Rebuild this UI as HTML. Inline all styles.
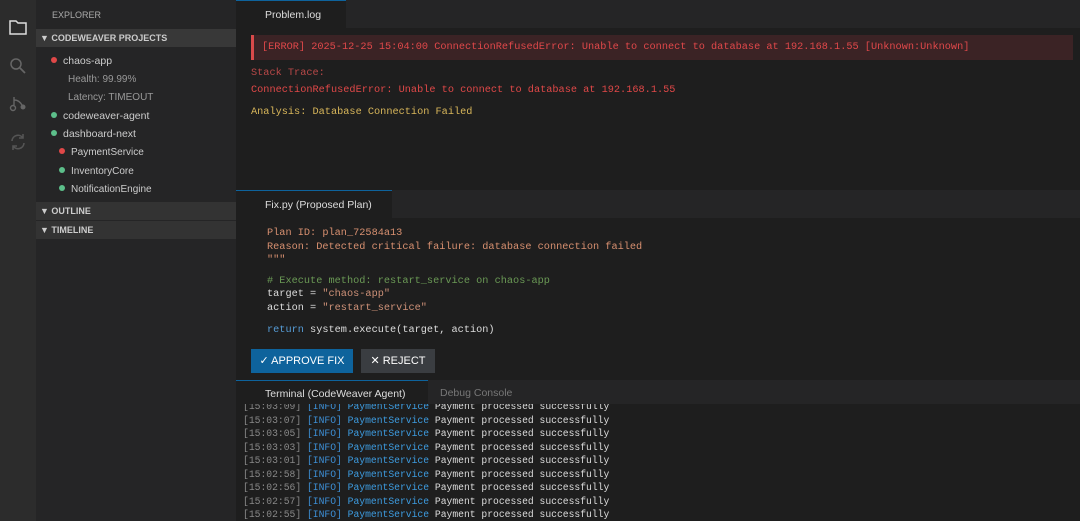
<!DOCTYPE html>
<html><head><style>
*{margin:0;padding:0;box-sizing:border-box}
body{width:1080px;height:521px;overflow:hidden;background:#1e1e1e;font-family:"Liberation Sans",sans-serif;position:relative}
.abs{position:absolute}
.mono{font-family:"Liberation Mono",monospace;font-size:10.25px;white-space:pre}
.act{left:0;top:0;width:36px;height:521px;background:#2c2c2c}
.side{left:36px;top:0;width:200px;height:521px;background:#252526;color:#ccc;font-size:11px}
.sh{position:absolute;left:0;width:200px;height:18px;background:#383838;font-weight:bold;font-size:9px;line-height:18px;padding-left:4px;color:#ccc}
.it{position:absolute;font-size:10.5px;color:#ccc}
.dot{display:inline-block;width:6px;height:6px;border-radius:50%;margin-right:6px;vertical-align:1px}
.r{background:#e04848}.g{background:#5cbf8a}
.tabbar{left:236px;width:844px;height:28px;background:#252526}
.tab{position:absolute;top:0;height:28px;background:#1e1e1e;border-top:1px solid #0e639c;color:#ddd;font-size:10.5px;line-height:28px;padding-left:29px}
</style></head><body>
<div class="abs act">
<svg class="abs" style="left:9px;top:19px" width="18" height="16" viewBox="0 0 18 16"><path d="M1 2h6l2 2h8v11H1z" fill="none" stroke="#ddd" stroke-width="1.5"/></svg>
<svg class="abs" style="left:9px;top:57px" width="18" height="18" viewBox="0 0 18 18"><circle cx="7" cy="7" r="5" fill="none" stroke="#666" stroke-width="1.5"/><path d="M11 11l5 5" stroke="#666" stroke-width="1.8"/></svg>
<svg class="abs" style="left:9px;top:94px" width="18" height="18" viewBox="0 0 18 18"><circle cx="4" cy="14" r="2.5" fill="none" stroke="#666" stroke-width="1.4"/><circle cx="14" cy="13" r="2.5" fill="#666"/><path d="M5 3v8M5 6c4 0 6 2 8 5" fill="none" stroke="#666" stroke-width="1.4"/></svg>
<svg class="abs" style="left:9px;top:133px" width="18" height="18" viewBox="0 0 18 18"><path d="M3 8a6 6 0 0 1 11-3M15 10a6 6 0 0 1-11 3" fill="none" stroke="#555" stroke-width="1.6"/><path d="M14 1v4h-4M4 17v-4h4" fill="none" stroke="#555" stroke-width="1.6"/></svg>
</div>
<div class="abs side">
<div class="abs" style="left:16px;top:10px;font-size:9px;color:#aaa">EXPLORER</div>
<div class="sh" style="top:29px">▼ CODEWEAVER PROJECTS</div>
<div class="it" style="left:15px;top:55px"><span class="dot r"></span>chaos-app</div>
<div class="it" style="left:32px;top:74px;color:#999;font-size:10px">Health: 99.99%</div>
<div class="it" style="left:32px;top:92px;color:#999;font-size:10px">Latency: TIMEOUT</div>
<div class="it" style="left:15px;top:110px"><span class="dot g"></span>codeweaver-agent</div>
<div class="it" style="left:15px;top:128px"><span class="dot g"></span>dashboard-next</div>
<div class="it" style="left:23px;top:147px;font-size:10px"><span class="dot r"></span>PaymentService</div>
<div class="it" style="left:23px;top:166px;font-size:10px"><span class="dot g"></span>InventoryCore</div>
<div class="it" style="left:23px;top:184px;font-size:10px"><span class="dot g"></span>NotificationEngine</div>
<div class="sh" style="top:202px;background:#333">▼ OUTLINE</div>
<div class="sh" style="top:221px;background:#333">▼ TIMELINE</div>
</div>

<div class="abs tabbar" style="top:0"><div class="tab" style="left:0;width:110px">Problem.log</div></div>
<div class="abs" style="left:251px;top:35px;width:822px;height:25px;background:#3b2325;border-left:3px solid #d84a4a"></div>
<div class="abs mono" style="left:262px;top:41px;color:#e0484a">[ERROR] 2025-12-25 15:04:00 ConnectionRefusedError: Unable to connect to database at 192.168.1.55 [Unknown:Unknown]</div>
<div class="abs mono" style="left:251px;top:67px;color:#b84848">Stack Trace:</div>
<div class="abs mono" style="left:251px;top:84px;color:#e04848">ConnectionRefusedError: Unable to connect to database at 192.168.1.55</div>
<div class="abs mono" style="left:251px;top:106px;color:#d8b65a">Analysis: Database Connection Failed</div>

<div class="abs tabbar" style="top:190px"><div class="tab" style="left:0;width:156px">Fix.py (Proposed Plan)</div></div>
<div class="abs mono" style="left:267px;top:227px;color:#d89070;line-height:13.5px">Plan ID: plan_72584a13
Reason: Detected critical failure: database connection failed
"""</div>
<div class="abs mono" style="left:267px;top:275px;color:#6a9955">#&nbsp;Execute method: restart_service on chaos-app</div>
<div class="abs mono" style="left:267px;top:288px;color:#ddd;line-height:13.5px">target = <span style="color:#ce9178">"chaos-app"</span>
action = <span style="color:#ce9178">"restart_service"</span></div>
<div class="abs mono" style="left:267px;top:324px;color:#ddd"><span style="color:#569cd6">return</span> system.execute(target, action)</div>
<div class="abs" style="left:251px;top:349px;width:102px;height:24px;background:#0e639c;color:#fff;font-size:11px;line-height:24px;text-align:center">✓ APPROVE FIX</div>
<div class="abs" style="left:361px;top:349px;width:74px;height:24px;background:#3a3d41;color:#fff;font-size:11px;line-height:24px;text-align:center">✕ REJECT</div>

<div class="abs" style="left:236px;top:380px;width:844px;height:141px;background:#1e1e1e"></div>
<div class="abs tabbar" style="top:380px;height:24px"><div class="tab" style="left:0;width:192px;height:24px;line-height:26px">Terminal (CodeWeaver Agent)</div><div class="abs" style="left:204px;top:0;line-height:26px;font-size:10.5px;color:#777">Debug Console</div></div>
<div class="abs mono" style="left:243px;top:400px;font-size:9.7px;line-height:13.5px;color:#888;height:121px;overflow:hidden;clip-path:inset(4px 0 0 0)">[15:03:09] <span style="color:#3d8fd6">[INFO]</span> <span style="color:#3d9ce0">PaymentService</span> <span style="color:#ddd">Payment processed successfully</span>
[15:03:07] <span style="color:#3d8fd6">[INFO]</span> <span style="color:#3d9ce0">PaymentService</span> <span style="color:#ddd">Payment processed successfully</span>
[15:03:05] <span style="color:#3d8fd6">[INFO]</span> <span style="color:#3d9ce0">PaymentService</span> <span style="color:#ddd">Payment processed successfully</span>
[15:03:03] <span style="color:#3d8fd6">[INFO]</span> <span style="color:#3d9ce0">PaymentService</span> <span style="color:#ddd">Payment processed successfully</span>
[15:03:01] <span style="color:#3d8fd6">[INFO]</span> <span style="color:#3d9ce0">PaymentService</span> <span style="color:#ddd">Payment processed successfully</span>
[15:02:58] <span style="color:#3d8fd6">[INFO]</span> <span style="color:#3d9ce0">PaymentService</span> <span style="color:#ddd">Payment processed successfully</span>
[15:02:56] <span style="color:#3d8fd6">[INFO]</span> <span style="color:#3d9ce0">PaymentService</span> <span style="color:#ddd">Payment processed successfully</span>
[15:02:57] <span style="color:#3d8fd6">[INFO]</span> <span style="color:#3d9ce0">PaymentService</span> <span style="color:#ddd">Payment processed successfully</span>
[15:02:55] <span style="color:#3d8fd6">[INFO]</span> <span style="color:#3d9ce0">PaymentService</span> <span style="color:#ddd">Payment processed successfully</span></div>
</body></html>
